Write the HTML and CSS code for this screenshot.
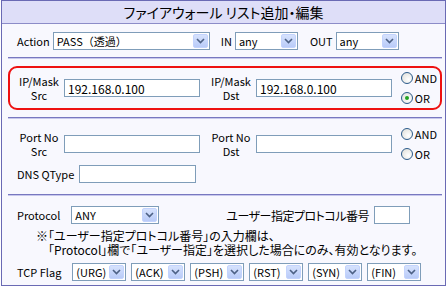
FILE: index.html
```html
<!DOCTYPE html>
<html lang="ja">
<head>
  <meta charset="UTF-8">
  <title>ファイアウォール リスト追加・編集</title>
  <link rel="stylesheet" href="styles.css">
</head>
<body>

  <div class="panel">
    <h1 class="panel-title">ファイアウォール リスト追加・編集</h1>
    <form class="panel-body">

      <!-- Action / direction -->
      <div class="row row-action">
        <label>Action</label>
        <span class="sel sel-action"><select><option>PASS（透過）</option></select><span class="sel-btn"><svg width="9" height="6" viewBox="0 0 9 6"><path d="M1 1l3.5 3.5L8 1" fill="none" stroke="#4d6185" stroke-width="1.6"/></svg></span></span>
        <label class="lbl-in">IN</label>
        <span class="sel sel-dir"><select><option>any</option></select><span class="sel-btn"><svg width="9" height="6" viewBox="0 0 9 6"><path d="M1 1l3.5 3.5L8 1" fill="none" stroke="#4d6185" stroke-width="1.6"/></svg></span></span>
        <label class="lbl-out">OUT</label>
        <span class="sel sel-dir"><select><option>any</option></select><span class="sel-btn"><svg width="9" height="6" viewBox="0 0 9 6"><path d="M1 1l3.5 3.5L8 1" fill="none" stroke="#4d6185" stroke-width="1.6"/></svg></span></span>
      </div>

      <hr class="sep">

      <!-- IP / Mask -->
      <div class="pair pair-hot">
        <div class="field">
          <label class="two-line">IP/Mask<br>Src</label>
          <input type="text" class="addr" value="192.168.0.100">
        </div>
        <div class="field field-dst">
          <label class="two-line">IP/Mask<br>Dst</label>
          <input type="text" class="addr" value="192.168.0.100">
        </div>
        <div class="logic">
          <label><input type="radio" name="iplogic">AND</label>
          <label><input type="radio" name="iplogic" checked>OR</label>
        </div>
      </div>

      <hr class="sep">

      <!-- Port -->
      <div class="pair pair-port">
        <div class="field">
          <label class="two-line">Port No<br>Src</label>
          <input type="text" class="addr">
        </div>
        <div class="field field-dst">
          <label class="two-line">Port No<br>Dst</label>
          <input type="text" class="addr">
        </div>
        <div class="logic">
          <label><input type="radio" name="portlogic">AND</label>
          <label><input type="radio" name="portlogic">OR</label>
        </div>
      </div>

      <div class="row row-dns">
        <label>DNS QType</label>
        <input type="text" class="qtype">
      </div>

      <hr class="sep sep-proto">

      <!-- Protocol -->
      <div class="row row-proto">
        <label>Protocol</label>
        <span class="sel sel-proto"><select><option>ANY</option></select><span class="sel-btn"><svg width="9" height="6" viewBox="0 0 9 6"><path d="M1 1l3.5 3.5L8 1" fill="none" stroke="#4d6185" stroke-width="1.6"/></svg></span></span>
        <label class="lbl-user">ユーザー指定プロトコル番号</label>
        <input type="text" class="protonum">
      </div>

      <p class="note">※「ユーザー指定プロトコル番号」の入力欄は、<br>「Protocol」欄で「ユーザー指定」を選択した場合にのみ、有効となります。</p>

      <!-- TCP flags -->
      <div class="row row-flags">
        <label>TCP Flag</label>
        <div class="flags">
          <span class="sel sel-flag"><select><option>(URG)</option></select><span class="sel-btn"><svg width="9" height="6" viewBox="0 0 9 6"><path d="M1 1l3.5 3.5L8 1" fill="none" stroke="#4d6185" stroke-width="1.6"/></svg></span></span>
          <span class="sel sel-flag"><select><option>(ACK)</option></select><span class="sel-btn"><svg width="9" height="6" viewBox="0 0 9 6"><path d="M1 1l3.5 3.5L8 1" fill="none" stroke="#4d6185" stroke-width="1.6"/></svg></span></span>
          <span class="sel sel-flag"><select><option>(PSH)</option></select><span class="sel-btn"><svg width="9" height="6" viewBox="0 0 9 6"><path d="M1 1l3.5 3.5L8 1" fill="none" stroke="#4d6185" stroke-width="1.6"/></svg></span></span>
          <span class="sel sel-flag"><select><option>(RST)</option></select><span class="sel-btn"><svg width="9" height="6" viewBox="0 0 9 6"><path d="M1 1l3.5 3.5L8 1" fill="none" stroke="#4d6185" stroke-width="1.6"/></svg></span></span>
          <span class="sel sel-flag"><select><option>(SYN)</option></select><span class="sel-btn"><svg width="9" height="6" viewBox="0 0 9 6"><path d="M1 1l3.5 3.5L8 1" fill="none" stroke="#4d6185" stroke-width="1.6"/></svg></span></span>
          <span class="sel sel-flag"><select><option>(FIN)</option></select><span class="sel-btn"><svg width="9" height="6" viewBox="0 0 9 6"><path d="M1 1l3.5 3.5L8 1" fill="none" stroke="#4d6185" stroke-width="1.6"/></svg></span></span>
        </div>
      </div>

    </form>
  </div>

</body>
</html>
```

FILE: styles.css
```css
/* General */
* {
  box-sizing: border-box;
}

body {
  margin: 0;
  font-family: "Noto Sans CJK JP", "DejaVu Sans", sans-serif;
  font-size: 11px;
  line-height: 13px;
  font-feature-settings: "palt";
  color: #000;
  background: #fff;
}

/* Panel */
.panel {
  width: 445px;
  height: 286px;
  margin-left: 1px;
  border: 1px solid #6a6ab4;
  background: #f8f8fe;
}

.panel-title {
  margin: 0;
  height: 23px;
  background: #dedef8;
  border-bottom: 1px solid #8c8cc8;
  font-size: 14px;
  font-weight: normal;
  line-height: 22px;
  text-align: center;
}

.panel-body {
  padding: 8px 3px 0 6px;
}

.row {
  display: flex;
  align-items: center;
  padding-left: 9px;
}

.sep {
  margin: 7px 0;
  border: 0;
  border-top: 1px solid #7878c0;
  border-bottom: 1px solid #c8c8ec;
}

/* Form controls */
input[type="text"] {
  height: 18px;
  margin: 0;
  padding: 0 3px;
  border: 1px solid #7f9db9;
  background: #fff;
  font: inherit;
  font-size: 12px;
}

.sel {
  position: relative;
  display: inline-block;
  height: 18px;
  border: 1px solid #7f9db9;
  background: #fff;
}

.sel select {
  appearance: none;
  -webkit-appearance: none;
  width: 100%;
  height: 16px;
  margin: 0;
  padding: 0 0 0 3px;
  border: 0;
  background: transparent;
  font: inherit;
  font-feature-settings: normal;
  line-height: 16px;
  color: #000;
}

.sel-btn {
  position: absolute;
  top: 1px;
  right: 1px;
  width: 15px;
  height: 14px;
  display: flex;
  align-items: center;
  justify-content: center;
  border: 1px solid #c3d3fd;
  border-radius: 2px;
  background: linear-gradient(#d6e2fd, #b9cbf8);
  pointer-events: none;
}

/* Action row */
.row-action .sel {
  margin-left: 3px;
}

.sel-action {
  width: 157px;
}

.sel-dir {
  width: 63px;
}

.lbl-in {
  margin-left: 11px;
}

.lbl-out {
  margin-left: 12px;
}

/* Src / Dst pairs */
.pair {
  display: flex;
  align-items: center;
  height: 44px;
  padding: 0 3px 0 7px;
  border: 2px solid transparent;
  border-radius: 9px;
}

.pair-hot {
  border-color: #ee1111;
}

.pair-port {
  height: 36px;
  margin-top: 5px;
}

.field {
  display: flex;
  align-items: center;
}

.field-dst {
  margin-left: 9px;
}

.two-line {
  width: 44px;
  line-height: 14px;
  text-align: center;
}

.addr {
  width: 136px;
  margin-left: 3px !important;
}

.logic {
  display: flex;
  flex-direction: column;
  gap: 6px;
  margin-left: auto;
}

.logic label {
  display: flex;
  align-items: center;
  gap: 2px;
  line-height: 14px;
}

.logic input[type="radio"] {
  appearance: none;
  -webkit-appearance: none;
  width: 12px;
  height: 12px;
  margin: 0;
  border: 1px solid #2a5a8a;
  border-radius: 50%;
  background: radial-gradient(circle at 65% 65%, #fff, #dcdcd6);
  display: grid;
  place-items: center;
}

.logic input[type="radio"]:checked::after {
  content: "";
  width: 4px;
  height: 4px;
  border-radius: 50%;
  background: #22a222;
}

/* DNS */
.row-dns {
  margin-top: 3px;
}

.qtype {
  width: 117px;
  margin-left: 5px !important;
}

.sep-proto {
  margin: 11px 0 10px;
}

/* Protocol */
.sel-proto {
  width: 88px;
  margin-left: 11px;
}

.lbl-user {
  margin-left: auto;
  font-size: 12px;
  letter-spacing: -0.5px;
}

.protonum {
  width: 36px;
  margin: 0 32px 0 5px !important;
}

.note {
  margin: 5px 0 0;
  padding-left: 40px;
  font-size: 12px;
  line-height: 14px;
  text-indent: -12px;
}

/* TCP flags */
.row-flags {
  margin-top: 6px;
}

.flags {
  display: flex;
  gap: 5px;
  margin-left: 11px;
}

.sel-flag {
  width: 54px;
}
```
